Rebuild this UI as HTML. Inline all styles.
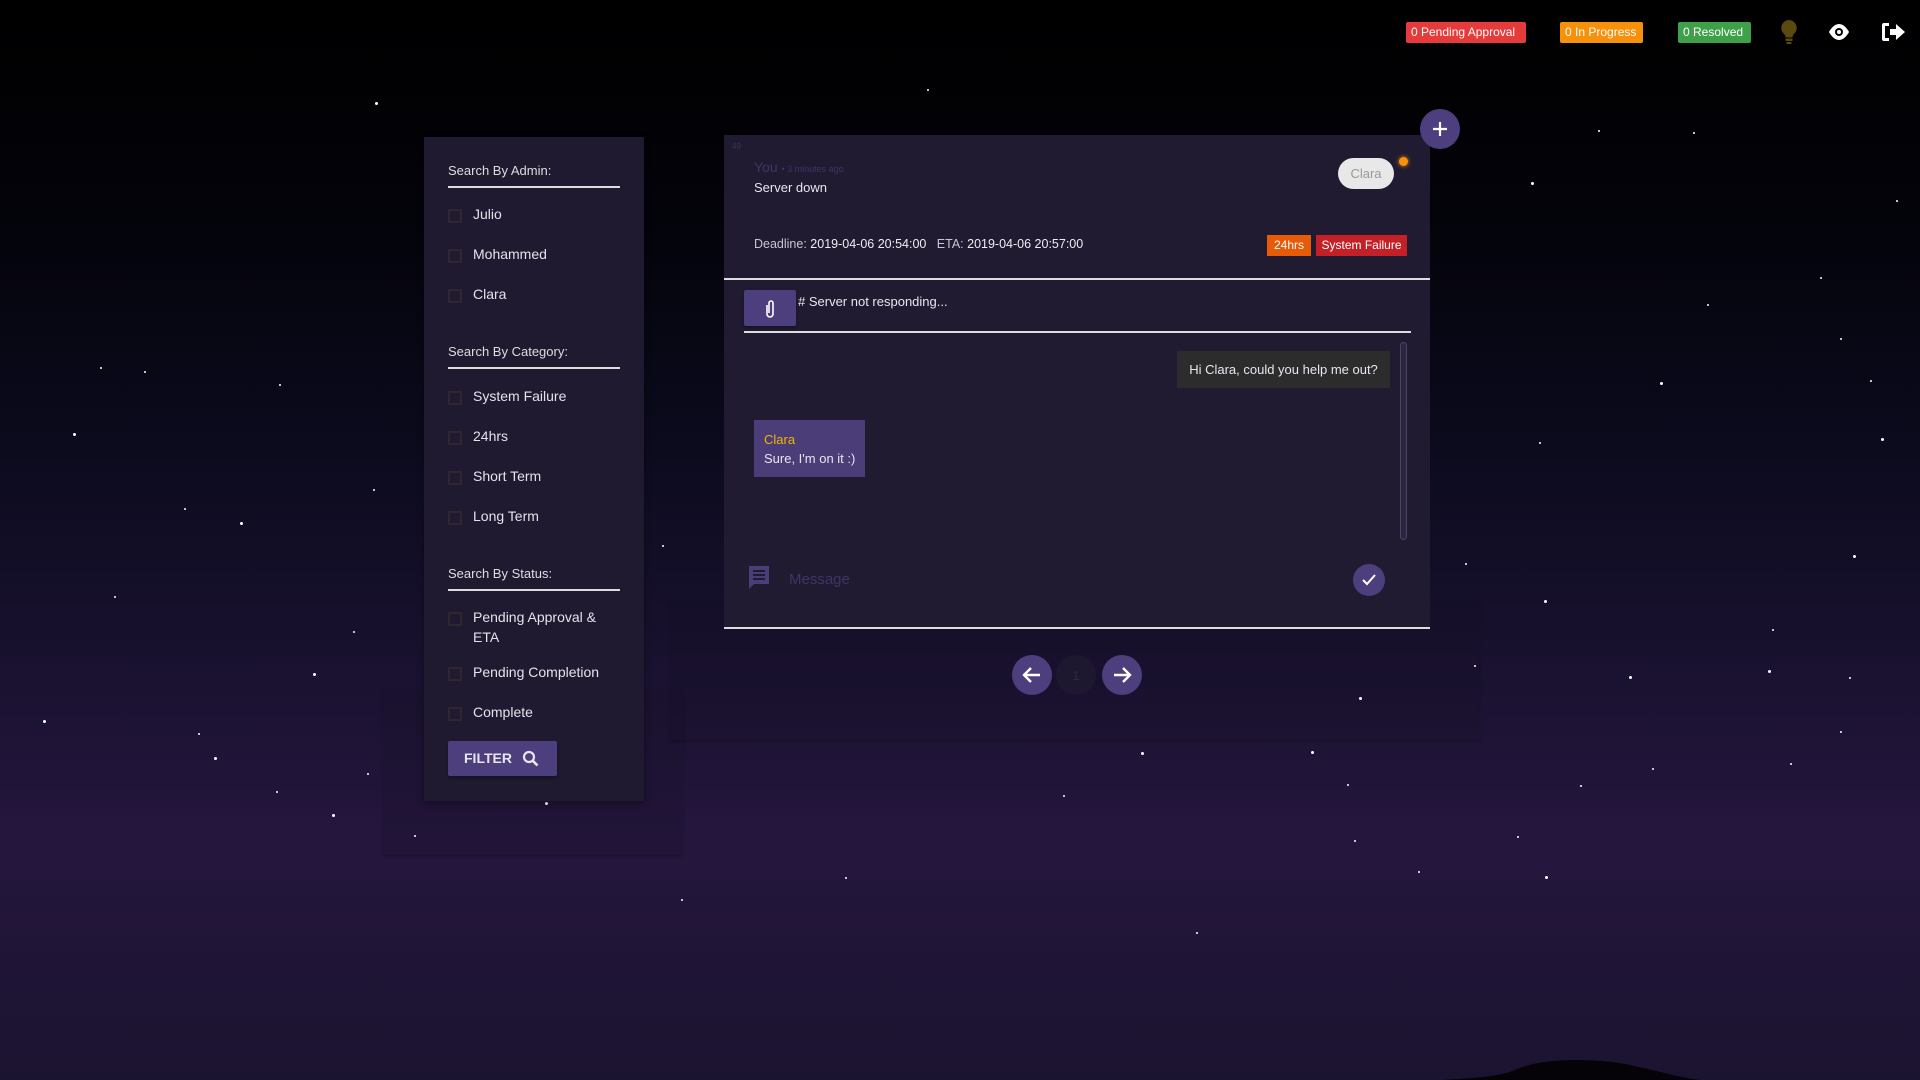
<!DOCTYPE html>
<html><head><meta charset="utf-8">
<style>
*{box-sizing:border-box;margin:0;padding:0}
html,body{width:1920px;height:1080px;overflow:hidden}
body{font-family:"Liberation Sans",sans-serif;color:#e8e6ee;position:relative;
background:linear-gradient(180deg,#000 0%,#03030a 20%,#0b0a1c 40%,#18112e 60%,#25163e 78%,#1e1434 92%,#1b1430 100%);}
.abs{position:absolute}
.star{position:absolute;width:3px;height:3px;border-radius:50%;background:#fff}
.badge{position:absolute;top:22px;height:21px;font-size:12px;color:#fff;padding:0 5px;line-height:21px;border-radius:2px}
.side{left:424px;top:137px;width:220px;height:664px;background:#1f1a30;box-shadow:0 2px 6px rgba(0,0,0,.4)}
.hdr{position:absolute;left:24px;font-size:13px;color:#ddd}
.line{position:absolute;left:24px;width:172px;height:2px;background:#ddd}
.item{position:absolute;left:24px;font-size:14px;color:#e4e2ea}
.item i{position:absolute;left:0;top:2px;width:14px;height:14px;border:2px solid #2f2630;border-radius:1px}
.item span{position:absolute;left:25px;white-space:nowrap;line-height:20px;top:-3px}
.card{left:724px;top:135px;width:706px;height:494px;background:#201b31;border-bottom:2px solid #ddd}
.circ{position:absolute;border-radius:50%;background:#4d3f7d;display:flex;align-items:center;justify-content:center}
</style></head><body>
<div class="abs" style="left:383px;top:690px;width:300px;height:165px;background:rgba(20,14,34,.2);box-shadow:0 2px 3px rgba(0,0,0,.2)"></div>
<div class="abs" style="left:671px;top:600px;width:808px;height:140px;background:rgba(20,14,34,.2);box-shadow:0 2px 3px rgba(0,0,0,.2)"></div>

<div id="stars"></div>
<svg class="abs" style="left:1440px;top:1040px" width="300" height="40"><path d="M0 40 C40 38 60 36 75 30 C100 18 150 18 185 24 C215 30 240 38 260 40Z" fill="#050308"/></svg>

<div class="badge" style="left:1406px;width:120px;background:#e53b3b">0 Pending Approval</div>
<div class="badge" style="left:1560px;width:83px;background:#f7900a">0 In Progress</div>
<div class="badge" style="left:1678px;width:73px;background:#3fa04a">0 Resolved</div>
<svg class="abs" style="left:1779px;top:19px" width="20" height="26" viewBox="0 0 20 26"><path d="M10 1a8 8 0 0 0-5 14c1 1 1.5 2 1.5 3.5h7c0-1.5.5-2.5 1.5-3.5A8 8 0 0 0 10 1z" fill="#5a4a10"/><rect x="6.5" y="19.5" width="7" height="2.5" fill="#5a4a10"/><rect x="7.5" y="23" width="5" height="2" fill="#5a4a10"/></svg>
<svg class="abs" style="left:1827px;top:22px" width="24" height="20" viewBox="0 0 24 20"><path d="M12 2C6 2 2 10 2 10s4 8 10 8 10-8 10-8S18 2 12 2z" fill="#fff"/><circle cx="12" cy="10" r="4" fill="#000"/><circle cx="12" cy="10" r="2" fill="#fff"/></svg>
<svg class="abs" style="left:1880px;top:20px" width="26" height="24" viewBox="0 0 26 24"><path d="M9 3H4a2 2 0 0 0-2 2v14a2 2 0 0 0 2 2h5v-3H5V6h4z" fill="#fff"/><path d="M10 9h6V4l9 8-9 8v-5h-6z" fill="#fff"/></svg>

<div class="abs side">
  <div class="hdr" style="top:26px">Search By Admin:</div><div class="line" style="top:49px"></div>
  <div class="item" style="top:70px"><i></i><span>Julio</span></div>
  <div class="item" style="top:110px"><i></i><span>Mohammed</span></div>
  <div class="item" style="top:150px"><i></i><span>Clara</span></div>
  <div class="hdr" style="top:207px">Search By Category:</div><div class="line" style="top:230px"></div>
  <div class="item" style="top:252px"><i></i><span>System Failure</span></div>
  <div class="item" style="top:292px"><i></i><span>24hrs</span></div>
  <div class="item" style="top:332px"><i></i><span>Short Term</span></div>
  <div class="item" style="top:372px"><i></i><span>Long Term</span></div>
  <div class="hdr" style="top:429px">Search By Status:</div><div class="line" style="top:452px"></div>
  <div class="item" style="top:473px"><i></i><span>Pending Approval &amp;<br>ETA</span></div>
  <div class="item" style="top:528px"><i></i><span>Pending Completion</span></div>
  <div class="item" style="top:568px"><i></i><span>Complete</span></div>
  <div class="abs" style="left:24px;top:604px;width:109px;height:35px;background:#4d3f7d;border-radius:2px;box-shadow:0 2px 3px rgba(0,0,0,.3);font-size:14px;font-weight:bold;color:#e8e6ee;line-height:35px;padding-left:16px">FILTER
    <svg class="abs" style="left:74px;top:9px" width="17" height="17" viewBox="0 0 17 17"><circle cx="7" cy="7" r="5" stroke="#e8e6ee" stroke-width="2.2" fill="none"/><path d="M10.5 10.5l5 5" stroke="#e8e6ee" stroke-width="2.6"/></svg></div>
</div>

<div class="abs card">
  <div class="abs" style="left:8px;top:7px;font-size:8px;color:#3a3450">49</div>
  <div class="abs" style="left:30px;top:24px;font-size:14px;color:#3f3566">You <span style="font-size:9px">• 3 minutes ago</span></div>
  <div class="abs" style="left:30px;top:45px;font-size:13px;color:#e8e6ee">Server down</div>
  <div class="abs" style="left:614px;top:23px;width:56px;height:31px;border-radius:16px;background:#e8e8e8;color:#999;font-size:13px;text-align:center;line-height:31px">Clara</div>
  <div class="abs" style="left:675px;top:22px;width:9px;height:9px;border-radius:50%;background:#f7900a;box-shadow:0 0 4px #f7900a"></div>
  <div class="abs" style="left:30px;top:102px;font-size:12.5px;color:#c8c6d0">Deadline: <span style="color:#eee">2019-04-06 20:54:00</span>&nbsp;&nbsp;&nbsp;ETA: <span style="color:#eee">2019-04-06 20:57:00</span></div>
  <div class="abs" style="left:543px;top:100px;width:44px;height:21px;background:#e65a08;color:#fff;font-size:12px;line-height:21px;text-align:center">24hrs</div>
  <div class="abs" style="left:592px;top:100px;width:91px;height:21px;background:#c42027;color:#fff;font-size:12px;line-height:21px;text-align:center">System Failure</div>
  <div class="abs" style="left:0;top:143px;width:706px;height:2px;background:#ddd"></div>
  <div class="abs" style="left:20px;top:155px;width:52px;height:36px;background:#4d3f7d;border-radius:2px;box-shadow:0 2px 3px rgba(0,0,0,.3)">
    <svg class="abs" style="left:19px;top:9px" width="14" height="20" viewBox="0 0 14 20"><path d="M4 6v9a3 3 0 0 0 6 0V4a2 2 0 0 0-4 0v10" stroke="#fff" stroke-width="1.6" fill="none"/></svg></div>
  <div class="abs" style="left:74px;top:159px;font-size:13px;color:#e8e6ee">#&nbsp;Server not responding...</div>
  <div class="abs" style="left:20px;top:196px;width:667px;height:2px;background:#ddd"></div>
  <div class="abs" style="left:676px;top:207px;width:7px;height:198px;border-radius:4px;border:1px solid #4a4560;background:#2a2540"></div>
  <div class="abs" style="left:453px;top:216px;width:213px;height:37px;background:#2d2c2d;color:#e8e6ee;font-size:13px;line-height:37px;text-align:center">Hi Clara, could you help me out?</div>
  <div class="abs" style="left:30px;top:285px;width:111px;height:57px;background:#4a3d78;font-size:13px;padding:10px 0 0 10px;line-height:19px"><span style="color:#f0b400">Clara</span><br>Sure, I'm on it :)</div>
  <svg class="abs" style="left:24px;top:430px" width="22" height="26" viewBox="0 0 22 26"><path d="M1 1h20v18H6l-5 5z" fill="#4a3d78"/><path d="M5 6h12M5 10h12M5 14h12" stroke="#201b31" stroke-width="2"/></svg>
  <div class="abs" style="left:65px;top:436px;font-size:15px;color:#3f3566">Message</div>
  <div class="circ" style="left:629px;top:429px;width:32px;height:32px"><svg width="14" height="12" viewBox="0 0 14 12"><path d="M1 6l4 4 8-9" stroke="#fff" stroke-width="2" fill="none"/></svg></div>
</div>
<div class="circ" style="left:1420px;top:109px;width:40px;height:40px"><svg width="18" height="18"><path d="M9 2v14M2 9h14" stroke="#fff" stroke-width="2.2"/></svg></div>

<div class="circ" style="left:1012px;top:655px;width:40px;height:40px"><svg width="20" height="18" viewBox="0 0 20 18"><path d="M18 9H3M9 2L2 9l7 7" stroke="#fff" stroke-width="2.4" fill="none"/></svg></div>
<div class="circ" style="left:1056px;top:655px;width:40px;height:40px;background:#1d1730;color:#2f2a40;font-size:13px">1</div>
<div class="circ" style="left:1102px;top:655px;width:40px;height:40px"><svg width="20" height="18" viewBox="0 0 20 18"><path d="M2 9h15M11 2l7 7-7 7" stroke="#fff" stroke-width="2.4" fill="none"/></svg></div>

<script>
var s=[[306,83],[757,73],[1305,106],[1356,312],[1394,248],[228,314],[60,354],[118,303],[93,487],[196,426],[305,399],[402,412],[416,374],[541,445],[1257,361],[1261,490],[1196,460],[1447,514],[1330,552],[1349,627],[1239,683],[1262,715],[1503,597],[1462,623],[1513,453],[556,734],[690,716],[932,614],[1106,686],[1290,641],[1110,569],[1204,543],[1527,310],[1250,149],[1383,108],[1548,163],[35,588],[225,646],[300,631],[271,665],[338,682],[480,592],[445,655],[868,649],[977,761],[1071,613],[1100,640],[1158,711],[1444,547],[1510,553],[162,599],[175,618],[1486,226],[1503,276],[1536,358],[520,122],[82,300],[256,550],[288,515],[150,415]];
var h='';s.forEach(function(p,i){var z=i%3==0?3:2;h+='<div class="star" style="left:'+Math.round(p[0]*1.2245)+'px;top:'+Math.round(p[1]*1.2245)+'px;width:'+z+'px;height:'+z+'px"></div>'});
document.getElementById('stars').innerHTML=h;
</script>
</body></html>
